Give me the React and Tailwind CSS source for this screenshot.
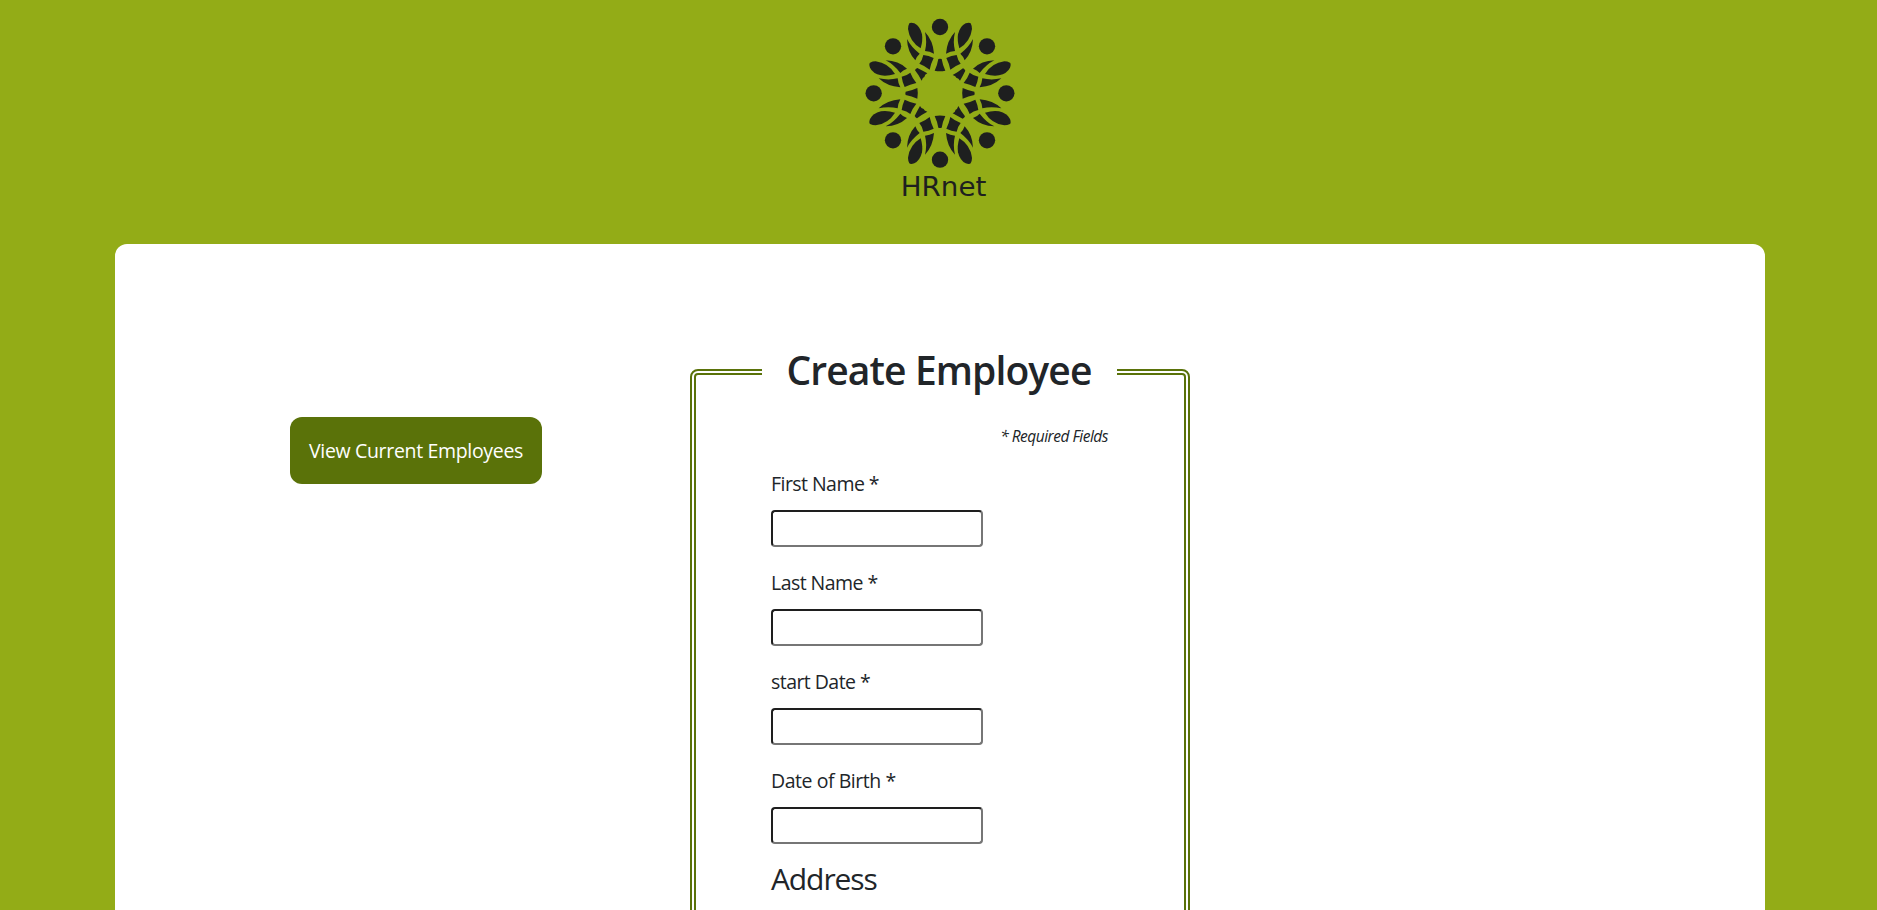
const font = "font-['Open_Sans','Noto_Sans',sans-serif]";

function Petals() {
  return (
    <g>
      <path d="M332 40Q343 36 347 40Q351 48 351 57Q346 95 313 115Q306 92 309 73Q315 48 332 40Z" />
      <path d="M300 66Q276 91 273 131Q286 124 300 123Q293 96 300 66Z" />
      <path d="M354 87Q342 111 316 131Q325 139 329 151Q353 125 354 87Z" />
      <path d="M274 144Q289 137 305 135Q308 150 317 161Q299 168 286 179Q282 160 274 144Z" />
    </g>
  );
}

function Quarter({ angle }) {
  return (
    <g transform={`rotate(${angle} 255 250)`}>
      <Petals />
      <g transform="translate(255 250) matrix(0 -1 -1 0 0 0) translate(-255 -250)">
        <Petals />
      </g>
      <circle cx="255" cy="51" r="24.5" />
      <circle cx="396" cy="109" r="24.5" />
      <path d="M250 147Q255 145 260 147Q263 165 271 182Q255 185 239 182Q247 165 250 147Z" />
      <path d="M324 175Q328 176 331 182Q323 198 315 212Q311 204 304 203Q303 198 293 195Q309 187 324 175Z" />
    </g>
  );
}

function Logo() {
  return (
    <svg viewBox="0 0 510 585" className="h-[195px] w-[170px]" fill="#1e1f1f">
      {[0, 90, 180, 270].map((a) => (
        <Quarter key={a} angle={a} />
      ))}
      <text x="137" y="558" fontSize="80" textLength="257" lengthAdjust="spacingAndGlyphs" fontFamily="DejaVu Sans">
        HRnet
      </text>
    </svg>
  );
}

function Field({ label, tracking }) {
  return (
    <label className="mb-[22px] block h-[77px]">
      <span className={`block h-[40px] text-[19.5px] leading-7 whitespace-nowrap ${tracking}`}>{label}</span>
      <input className="block h-[37px] w-[212px] rounded-[4px] border-2 border-t-[#1e1e1e] border-r-[#767676] border-b-[#767676] border-l-[#1e1e1e] bg-white px-2 outline-none" />
    </label>
  );
}

export default function App() {
  return (
    <div className={`h-[910px] overflow-hidden bg-[#93ac17] text-[#212529] ${font}`}>
      <header className="flex h-[244px] justify-center pt-[10px] pl-[3px]">
        <Logo />
      </header>
      <main className="mr-[112px] ml-[115px] flex h-[1200px] rounded-xl bg-white">
        <div className="w-[575px] pt-[173px] pl-[175px]">
          <button className="flex h-[67px] w-[252px] items-center justify-center rounded-xl bg-[#5a7209] pt-px text-[19.5px] tracking-[-0.33px] whitespace-nowrap text-white">
            View Current Employees
          </button>
        </div>
        <form className="pt-[95px]">
          <fieldset className="h-[900px] w-[500px] rounded-lg border-[6px] border-double border-[#5a7209] pr-[51px] pl-[49px]">
            <legend className="mx-auto h-[66px] w-[355px] text-center text-[39px] leading-[62px] font-semibold tracking-[-0.9px] whitespace-nowrap">
              Create Employee
            </legend>
            <div className="pr-[25px] pl-[26px]">
              <p className="mt-[19px] text-right text-[15.5px] leading-6 tracking-[-0.5px] italic">* Required Fields</p>
              <div className="mt-[22px]">
                <Field label="First Name *" tracking="tracking-[-0.55px]" />
                <Field label="Last Name *" tracking="tracking-[-0.55px]" />
                <Field label="start Date *" tracking="tracking-[-0.55px]" />
                <Field label="Date of Birth *" tracking="tracking-[-0.45px]" />
              </div>
              <h2 className="-mt-[5px] text-[30px] leading-9 tracking-[-1.1px]">Address</h2>
            </div>
          </fieldset>
        </form>
      </main>
    </div>
  );
}
